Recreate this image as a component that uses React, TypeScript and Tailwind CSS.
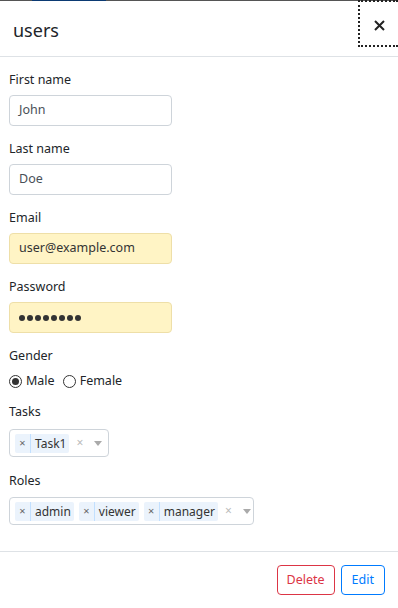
import { useState } from "react";

type Chip = { id: string; label: string };

const font = { fontFamily: '"Noto Sans", "Open Sans", sans-serif' };

function Field({
  label,
  value,
  autofill,
  password,
}: {
  label: string;
  value: string;
  autofill?: boolean;
  password?: boolean;
}) {
  return (
    <div className="mb-[13px]">
      <div className="mb-[5px] h-5 text-[12.5px] leading-5 text-[#212529]">{label}</div>
      <div
        className={
          "flex h-[31px] w-[163px] items-center rounded-[4px] border px-[9px] text-[12.5px] " +
          (autofill
            ? "border-[#eedfa8] bg-[#fff4c5] text-[#333]"
            : "border-[#ced4da] bg-white text-[#495057]")
        }
      >
        {password ? (
          <span className="flex gap-[2px]">
            {Array.from({ length: 8 }).map((_, i) => (
              <span key={i} className="h-[6px] w-[6px] rounded-full bg-[#333]" />
            ))}
          </span>
        ) : (
          value
        )}
      </div>
    </div>
  );
}

function MultiSelect({ chips, width }: { chips: Chip[]; width: string }) {
  return (
    <div
      className={
        "flex h-[28px] items-center gap-[5px] rounded-[4px] border border-[#ced4da] bg-white pl-[5px] " +
        width
      }
    >
      {chips.map((c) => (
        <span
          key={c.id}
          className="flex h-[19px] shrink-0 items-center rounded-[2px] bg-[#ebf3fc] text-[12px] text-[#333]"
        >
          <span className="flex h-full w-[16px] items-center justify-center border-r border-[#c2e0ff] text-[11px] text-[#666]">
            ×
          </span>
          <span className="pl-[4px] pr-[3px] leading-[19px]">{c.label}</span>
        </span>
      ))}
      <span className="ml-[2px] text-[12px] text-[#bbb]">×</span>
      <span className="ml-[6px] h-0 w-0 border-x-[4px] border-t-[5px] border-x-transparent border-t-[#aaa]" />
    </div>
  );
}

export default function App() {
  const [gender, setGender] = useState<"male" | "female">("male");

  return (
    <div className="h-[608px] w-[398px] overflow-hidden bg-white" style={font}>
      {/* strip of the page behind the dialog */}
      <div className="flex h-px w-full bg-[#555]">
        <div className="ml-[32px] w-[74px] bg-[#0b3a73]" />
      </div>

      <div className="flex h-[56px] items-start justify-between border-b border-[#dee2e6]">
        <h1 className="pl-[13px] pt-[17px] text-[18px] leading-6 text-[#212529]">users</h1>
        <button className="-mt-px flex h-[47px] w-[40px] items-center justify-center border-b-2 border-l-2 border-t-2 border-dotted border-[#222] pt-[4px]">
          <svg width="11" height="11" viewBox="0 0 11 11">
            <path d="M1 1L10 10M10 1L1 10" stroke="#222" strokeWidth="2" strokeLinecap="butt" />
          </svg>
        </button>
      </div>

      <div className="px-[9px] pt-[13px]">
        <Field label="First name" value="John" />
        <Field label="Last name" value="Doe" />
        <Field label="Email" value="user@example.com" autofill />
        <Field label="Password" value="password" autofill password />

        <div className="mb-[11px]">
          <div className="mb-[5px] h-5 text-[12.5px] leading-5 text-[#212529]">Gender</div>
          <div className="flex h-5 items-center gap-[4px] text-[12.5px] text-[#212529]">
            <label className="flex items-center gap-[4px]" onClick={() => setGender("male")}>
              <span className="flex h-[13px] w-[13px] items-center justify-center rounded-full border border-[#333]">
                {gender === "male" && <span className="h-[7px] w-[7px] rounded-full bg-[#333]" />}
              </span>
              Male
            </label>
            <label className="ml-[4px] flex items-center gap-[4px]" onClick={() => setGender("female")}>
              <span className="flex h-[13px] w-[13px] items-center justify-center rounded-full border border-[#333]">
                {gender === "female" && <span className="h-[7px] w-[7px] rounded-full bg-[#333]" />}
              </span>
              Female
            </label>
          </div>
        </div>

        <div className="mb-[14px]">
          <div className="mb-[7px] h-5 text-[12.5px] leading-5 text-[#212529]">Tasks</div>
          <MultiSelect width="w-[100px]" chips={[{ id: "t1", label: "Task1" }]} />
        </div>

        <div>
          <div className="mb-[6px] h-5 text-[12.5px] leading-5 text-[#212529]">Roles</div>
          <MultiSelect
            width="w-[245px]"
            chips={[
              { id: "r1", label: "admin" },
              { id: "r2", label: "viewer" },
              { id: "r3", label: "manager" },
            ]}
          />
        </div>
      </div>

      <div className="mt-[26px] flex justify-end gap-[6px] border-t border-[#dee2e6] px-[13px] pt-[13px]">
        <button className="h-[30px] rounded-[4px] border border-[#dc3545] px-[9px] text-[12.5px] text-[#dc3545]">
          Delete
        </button>
        <button className="h-[30px] rounded-[4px] border border-[#007bff] px-[10px] text-[12.5px] text-[#007bff]">
          Edit
        </button>
      </div>
    </div>
  );
}
